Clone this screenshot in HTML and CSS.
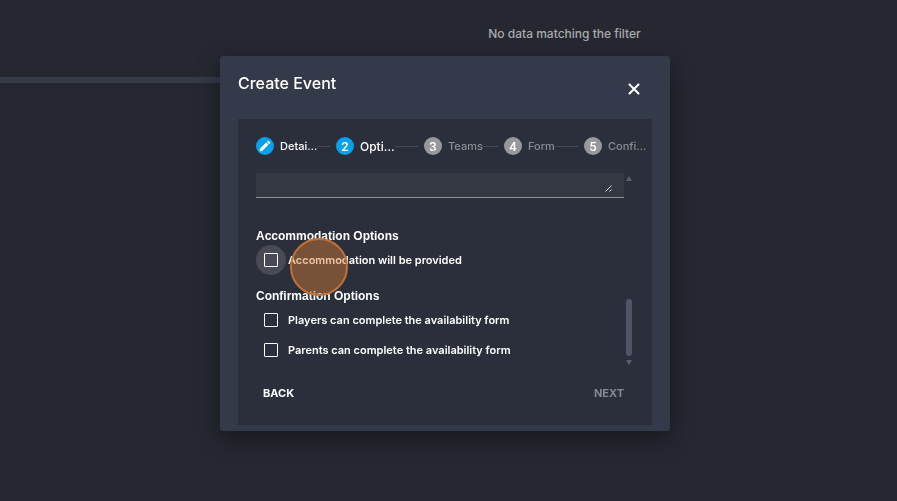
FILE: index.html
```
<!DOCTYPE html>
<html lang="en">
<head>
    <meta charset="UTF-8">
    <meta name="viewport" content="width=device-width, initial-scale=1.0">
    <title>Create Event</title>
    <link rel="stylesheet" href="styles.css">
</head>
<body>
    <main class="page">
        <p class="empty-message">No data matching the filter</p>
        <div class="page-divider"></div>
    </main>

    <div class="overlay">
        <div class="modal" role="dialog" aria-labelledby="modal-title">
            <header class="modal-header">
                <h2 id="modal-title">Create Event</h2>
                <button type="button" class="close" aria-label="Close">
                    <svg width="12" height="12" viewBox="0 0 12 12"><path d="M1.5 1.5l9 9M10.5 1.5l-9 9" stroke="#fff" stroke-width="2" stroke-linecap="round"/></svg>
                </button>
            </header>

            <form class="panel">
                <ol class="stepper">
                    <li class="step done">
                        <span class="step-icon">
                            <svg width="14" height="14" viewBox="0 0 24 24"><path fill="#fff" d="M3 17.25V21h3.75L17.81 9.94l-3.75-3.75L3 17.25zM20.71 7.04c.39-.39.39-1.02 0-1.41l-2.34-2.34c-.39-.39-1.02-.39-1.41 0l-1.83 1.83 3.75 3.75 1.83-1.83z"/></svg>
                        </span>
                        <span class="step-label">Detai…</span>
                    </li>
                    <li class="step current">
                        <span class="step-icon">2</span>
                        <span class="step-label">Opti…</span>
                    </li>
                    <li class="step">
                        <span class="step-icon">3</span>
                        <span class="step-label">Teams</span>
                    </li>
                    <li class="step">
                        <span class="step-icon">4</span>
                        <span class="step-label">Form</span>
                    </li>
                    <li class="step">
                        <span class="step-icon">5</span>
                        <span class="step-label">Confi…</span>
                    </li>
                </ol>

                <div class="step-body">
                    <div class="fields">
                        <div class="notes">
                            <textarea rows="1" aria-label="Notes"></textarea>
                            <svg class="resize-grip" width="7" height="7" viewBox="0 0 7 7"><path d="M0.5 6.5l6-6M4.5 6.5l2-2" stroke="#dcdde0" stroke-width="1"/></svg>
                        </div>

                        <h3>Accommodation Options</h3>
                        <label class="option focused">
                            <span class="ripple"><input type="checkbox" name="accommodation"></span>
                            Accommodation will be provided
                            <span class="click-marker"></span>
                        </label>

                        <h3>Confirmation Options</h3>
                        <label class="option">
                            <span class="ripple"><input type="checkbox" name="players"></span>
                            Players can complete the availability form
                        </label>
                        <label class="option">
                            <span class="ripple"><input type="checkbox" name="parents"></span>
                            Parents can complete the availability form
                        </label>
                    </div>

                    <div class="scrollbar" aria-hidden="true">
                        <svg width="6" height="5" viewBox="0 0 6 5"><path d="M3 0l3 5H0z" fill="#5a5f73"/></svg>
                        <div class="thumb"></div>
                        <svg width="6" height="5" viewBox="0 0 6 5"><path d="M0 0h6L3 5z" fill="#5a5f73"/></svg>
                    </div>
                </div>

                <footer class="actions">
                    <button type="button">BACK</button>
                    <button type="submit" disabled>NEXT</button>
                </footer>
            </form>
        </div>
    </div>
</body>
</html>
```
FILE: styles.css
```
* {
    box-sizing: border-box;
}
body {
    margin: 0;
    min-height: 100vh;
    background: #252831;
    color: #fff;
    font-family: Inter, "Open Sans", sans-serif;
    font-size: 11px;
    font-weight: 500;
}
h2, h3, p, ol {
    margin: 0;
    padding: 0;
}
button {
    background: none;
    border: none;
    padding: 0;
    color: inherit;
    font: inherit;
    cursor: pointer;
}
.empty-message {
    padding: 24px 0 0 232px;
    color: #a9aaac;
    font-size: 12px;
    line-height: 20px;
    text-align: center;
}
.page-divider {
    width: 50%;
    height: 6px;
    margin-top: 33px;
    background: #353948;
}
.overlay {
    position: fixed;
    inset: 0;
    display: flex;
    justify-content: center;
    align-items: flex-start;
    padding: 56px 7px 0 0;
}
.modal {
    width: 450px;
    padding: 0 18px 6px;
    background: #353a4a;
    border-radius: 3px;
    box-shadow: 0 8px 24px rgba(0, 0, 0, 0.4);
}
.modal-header {
    display: flex;
    justify-content: space-between;
    height: 63px;
    padding: 15px 12px 0 0;
}
.modal-header h2 {
    font-size: 16px;
    font-weight: 500;
    line-height: 24px;
}
.close {
    display: flex;
    align-items: center;
    height: 36px;
}
.panel {
    padding: 18px 18px 22px;
    background: #2b2f3b;
}

/* stepper */
.stepper {
    display: grid;
    grid-template-columns: 80px 88px 80px 80px 60px;
    list-style: none;
}
.step {
    display: flex;
    align-items: center;
    height: 18px;
    color: #8b8d94;
}
.step:not(:last-child)::after {
    content: "";
    flex: 1;
    height: 1px;
    margin-right: 6px;
    background: #454955;
}
.step.done,
.step.current {
    color: #fff;
}
.step.current {
    font-size: 12px;
}
.step-icon {
    display: flex;
    justify-content: center;
    align-items: center;
    flex: none;
    width: 18px;
    height: 18px;
    margin-right: 6px;
    border-radius: 50%;
    background: #97989b;
    color: #fff;
    font-family: Roboto, sans-serif;
    font-size: 13px;
}
.done .step-icon,
.current .step-icon {
    background: #07a0ec;
}

/* step content */
.step-body {
    display: flex;
    gap: 2px;
    margin: 18px 2px 0 0;
}
.fields {
    flex: 1;
    padding-bottom: 3px;
}
.notes {
    position: relative;
    margin-bottom: 17px;
}
.notes textarea {
    display: block;
    width: 100%;
    height: 25px;
    border: none;
    border-bottom: 1px solid #8e9199;
    background: #343843;
    color: #fff;
    resize: none;
}
.resize-grip {
    position: absolute;
    right: 12px;
    bottom: 6px;
}
h3 {
    padding-top: 12px;
    font-family: "Liberation Sans", Arial, sans-serif;
    font-size: 12px;
    font-weight: 700;
    line-height: 18px;
}
.option {
    position: relative;
    display: flex;
    align-items: center;
    gap: 2px;
    height: 30px;
    font-weight: 600;
}
.ripple {
    display: flex;
    justify-content: center;
    align-items: center;
    width: 30px;
    height: 30px;
    border-radius: 50%;
}
.focused .ripple {
    background: #484a55;
}
.option input {
    appearance: none;
    width: 14px;
    height: 14px;
    margin: 0;
    border: 1px solid #fff;
    border-radius: 1px;
}
.click-marker {
    position: absolute;
    top: -7px;
    left: 34px;
    width: 58px;
    height: 58px;
    border: 2px solid #bd7137;
    border-radius: 50%;
    background: rgba(215, 125, 55, 0.45);
    z-index: 1;
}
.scrollbar {
    display: flex;
    flex-direction: column;
    justify-content: space-between;
    width: 6px;
    padding: 3px 0;
}
.thumb {
    height: 57px;
    margin: auto 0 4px;
    border-radius: 3px;
    background: #50556a;
}

/* buttons */
.actions {
    display: flex;
    justify-content: space-between;
    padding: 15px 10px 0 7px;
}
.actions button {
    font-weight: 700;
    line-height: 20px;
}
.actions button:disabled {
    color: #858891;
}
```
